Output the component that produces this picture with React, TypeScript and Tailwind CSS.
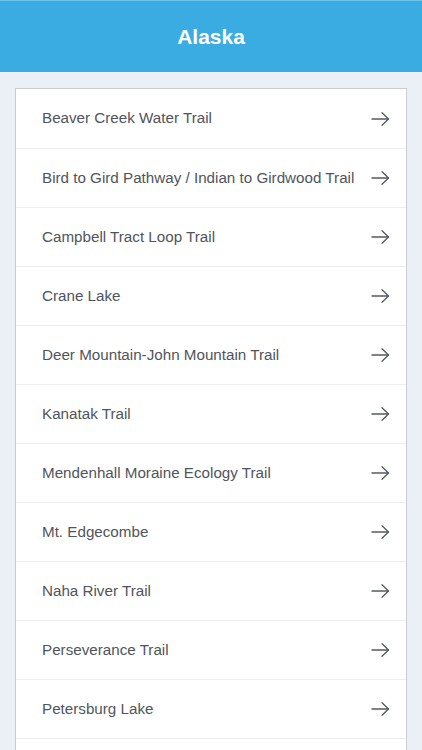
import React from "react";

const trails = [
  "Beaver Creek Water Trail",
  "Bird to Gird Pathway / Indian to Girdwood Trail",
  "Campbell Tract Loop Trail",
  "Crane Lake",
  "Deer Mountain-John Mountain Trail",
  "Kanatak Trail",
  "Mendenhall Moraine Ecology Trail",
  "Mt. Edgecombe",
  "Naha River Trail",
  "Perseverance Trail",
  "Petersburg Lake",
];

function Arrow() {
  return (
    <svg width="19" height="16" viewBox="0 0 19 16" fill="none" className="shrink-0">
      <path d="M1 8h16.5" stroke="#55595f" strokeWidth="1.3" strokeLinecap="round" />
      <path d="M11 1.8l6.5 6.2L11 14.2" stroke="#55595f" strokeWidth="1.3" strokeLinecap="round" strokeLinejoin="round" />
    </svg>
  );
}

export default function App() {
  return (
    <div
      className="w-[422px] h-[750px] overflow-hidden bg-[#ebeff6] flex flex-col"
      style={{ fontFamily: '"Liberation Sans", Arial, sans-serif' }}
    >
      <div className="h-[72px] shrink-0 bg-[#3aace2] border-t border-[#6cc4ee] flex items-center justify-center">
        <h1 className="text-white text-[21px] font-bold">Alaska</h1>
      </div>
      <div className="px-[15px] pt-[16px]">
        <div className="bg-white border border-[#c9cdd3]">
          {trails.map((t, i) => (
            <div
              key={t}
              className={`h-[59px] flex items-center justify-between pl-[26px] pr-[16px] ${
                i > 0 ? "border-t border-[#eceef1]" : ""
              }`}
            >
              <span className="text-[15.2px] text-[#50555c]">{t}</span>
              <Arrow />
            </div>
          ))}
          <div className="h-[59px] border-t border-[#eceef1]" />
        </div>
      </div>
    </div>
  );
}
